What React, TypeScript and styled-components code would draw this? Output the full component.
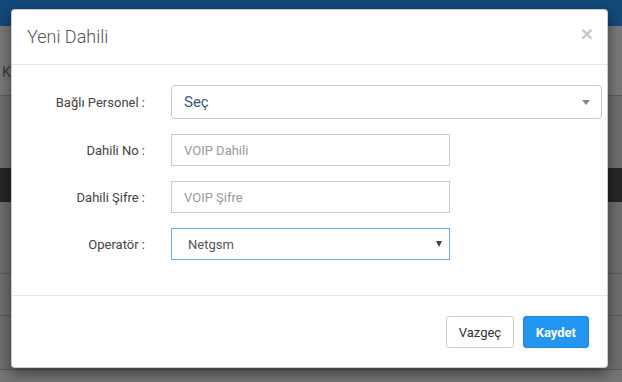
import styled, { createGlobalStyle } from "styled-components";

const GlobalStyle = createGlobalStyle`
  html, body {
    margin: 0;
    padding: 0;
    background: #6e6e6e;
  }
  * {
    box-sizing: border-box;
  }
`;

const Page = styled.div`
  position: relative;
  width: 622px;
  height: 382px;
  overflow: hidden;
  font-family: Roboto, "Liberation Sans", Arial, sans-serif;
`;

// dimmed page behind the modal backdrop
const Backdrop = styled.div`
  display: flex;
  flex-direction: column;
  height: 100%;
`;

const Band = styled.div<{ $h: number; $bg: string; $line?: boolean }>`
  flex: none;
  height: ${({ $h }) => $h}px;
  background: ${({ $bg }) => $bg};
  border-bottom: ${({ $line }) => ($line ? "1px solid #5b5b5b" : "none")};
`;

const SubBar = styled(Band)`
  padding: 38px 0 0 2px;
  color: #3d3d3d;
  font-size: 14px;
  line-height: 16px;
`;

const Modal = styled.div`
  position: absolute;
  left: 11px;
  top: 9px;
  width: 597px;
  display: flex;
  flex-direction: column;
  background: #fff;
  border: 1px solid rgba(0, 0, 0, 0.2);
  border-radius: 4px;
  box-shadow: 0 5px 15px rgba(0, 0, 0, 0.5);
`;

const Header = styled.div`
  display: flex;
  justify-content: space-between;
  align-items: flex-start;
  padding: 15px 14px 15px 15px;
  border-bottom: 1px solid #e5e5e5;
`;

const Title = styled.h4`
  margin: 0;
  font-size: 18px;
  font-weight: 300;
  line-height: 24px;
  color: #555;
`;

const Close = styled.button`
  margin-top: -2px;
  padding: 0;
  border: none;
  background: none;
  font-family: "Liberation Sans", Arial, sans-serif;
  font-size: 21px;
  font-weight: 700;
  line-height: 1;
  color: #c8c8c8;
  cursor: pointer;
`;

const Body = styled.div`
  display: grid;
  grid-template-columns: 118px auto;
  column-gap: 26px;
  row-gap: 15px;
  align-items: center;
  justify-items: start;
  padding: 20px 15px 35px;
`;

const Label = styled.label`
  justify-self: end;
  font-size: 13px;
  color: #444;
`;

const SearchSelect = styled.div`
  display: flex;
  align-items: center;
  justify-content: space-between;
  width: 431px;
  height: 34px;
  padding: 0 11px 0 12px;
  border: 1px solid #c3c9d8;
  border-radius: 4px;
  font-size: 15px;
  color: #3b5878;
`;

const Caret = styled.span<{ $color: string; $w: number; $h: number }>`
  width: 0;
  height: 0;
  border-style: solid;
  border-width: ${({ $w, $h }) => `${$h}px ${$w / 2}px 0`};
  border-color: ${({ $color }) => $color} transparent transparent;
`;

const TextInput = styled.input`
  width: 279px;
  height: 32px;
  padding: 0 12px;
  border: 1px solid #ccc;
  border-radius: 0;
  font-family: inherit;
  font-size: 13px;
  color: #555;
  outline: none;

  &::placeholder {
    color: #999;
  }
`;

const NativeSelect = styled.div`
  display: flex;
  align-items: center;
  justify-content: space-between;
  width: 279px;
  height: 32px;
  padding: 0 7px 0 16px;
  border: 1px solid #66afe9;
  font-size: 13px;
  color: #555;
`;

const Footer = styled.div`
  display: flex;
  justify-content: flex-end;
  gap: 9px;
  padding: 20px 18px 19px 15px;
  border-top: 1px solid #e5e5e5;
`;

const Button = styled.button<{ $primary?: boolean }>`
  height: 32px;
  padding: 0 ${({ $primary }) => ($primary ? "12px" : "11.5px")};
  border: 1px solid ${({ $primary }) => ($primary ? "#1e88e5" : "#ccc")};
  border-radius: 3px;
  background: ${({ $primary }) => ($primary ? "#2196f3" : "#fff")};
  color: ${({ $primary }) => ($primary ? "#fff" : "#333")};
  font-family: inherit;
  font-size: 13px;
  font-weight: ${({ $primary }) => ($primary ? 700 : 400)};
  cursor: pointer;
`;

function App() {
  return (
    <Page>
      <GlobalStyle />
      <Backdrop>
        <Band $h={26} $bg="#134a7a" />
        <SubBar $h={70} $bg="#7a7a7a" $line>
          K
        </SubBar>
        <Band $h={72} $bg="#6f6f6f" />
        <Band $h={34} $bg="#242628" />
        <Band $h={72} $bg="#6f6f6f" $line />
        <Band $h={42} $bg="#6f6f6f" $line />
        <Band $h={54} $bg="#6f6f6f" $line />
        <Band $h={12} $bg="#767676" />
      </Backdrop>

      <Modal>
        <Header>
          <Title>Yeni Dahili</Title>
          <Close>×</Close>
        </Header>
        <Body>
          <Label>Bağlı Personel :</Label>
          <SearchSelect>
            <span>Seç</span>
            <Caret $color="#888" $w={8} $h={5} />
          </SearchSelect>

          <Label>Dahili No :</Label>
          <TextInput placeholder="VOIP Dahili" />

          <Label>Dahili Şifre :</Label>
          <TextInput placeholder="VOIP Şifre" type="text" />

          <Label>Operatör :</Label>
          <NativeSelect>
            <span>Netgsm</span>
            <Caret $color="#444" $w={7} $h={6} />
          </NativeSelect>
        </Body>
        <Footer>
          <Button>Vazgeç</Button>
          <Button $primary>Kaydet</Button>
        </Footer>
      </Modal>
    </Page>
  );
}

export default App;
